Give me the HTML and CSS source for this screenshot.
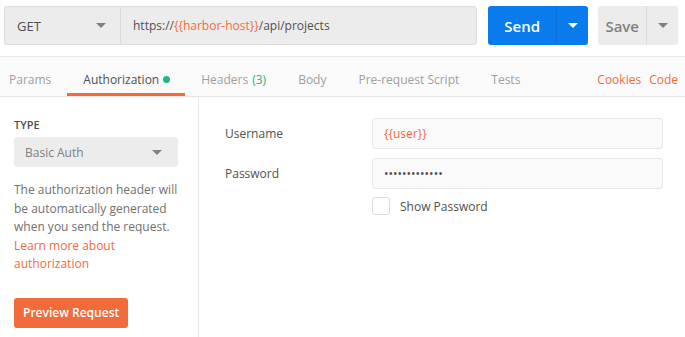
FILE: index.html
```html
<!DOCTYPE html>
<html>
<head>
    <meta charset="UTF-8">
    <title>Request - Authorization</title>
    <link rel="stylesheet" href="styles.css">
</head>
<body>
    <!-- request bar: method, url, send and save -->
    <div class="request-bar">
        <div class="method">
            <span>GET</span>
            <span class="caret"></span>
        </div>
        <div class="url">https://<span class="var">{{harbor-host}}</span>/api/projects</div>
        <div class="split-btn send-btn">
            <span class="main">Send</span>
            <span class="drop"><span class="caret white"></span></span>
        </div>
        <div class="split-btn save-btn">
            <span class="main">Save</span>
            <span class="drop"><span class="caret"></span></span>
        </div>
    </div>

    <!-- tabs -->
    <div class="tabs">
        <div class="tab">Params</div>
        <div class="tab active">Authorization <span class="dot"></span></div>
        <div class="tab">Headers <span class="count">(3)</span></div>
        <div class="tab">Body</div>
        <div class="tab">Pre-request Script</div>
        <div class="tab">Tests</div>
        <div class="tab-links">
            <span>Cookies</span>
            <span>Code</span>
        </div>
    </div>

    <!-- auth content -->
    <div class="auth">
        <div class="auth-side">
            <div class="type-label">TYPE</div>
            <div class="type-select">
                <span>Basic Auth</span>
                <span class="caret"></span>
            </div>
            <p class="help">
                The authorization header will be automatically generated when you send the request.
                <span class="link">Learn more about authorization</span>
            </p>
            <button class="preview-btn">Preview Request</button>
        </div>
        <div class="auth-form">
            <div class="form-row">
                <label>Username</label>
                <div class="field"><span class="var">{{user}}</span></div>
            </div>
            <div class="form-row">
                <label>Password</label>
                <div class="field dots">&bull;&bull;&bull;&bull;&bull;&bull;&bull;&bull;&bull;&bull;&bull;&bull;&bull;</div>
            </div>
            <div class="form-row check-row">
                <label></label>
                <div class="check">
                    <span class="box"></span>
                    <span>Show Password</span>
                </div>
            </div>
        </div>
    </div>
</body>
</html>
```

FILE: styles.css
```css
/* page */
body {
    margin: 0;
    font-family: 'Open Sans', 'Noto Sans', sans-serif;
    font-size: 12px;
    color: #505050;
    background-color: #fff;
}

.var {
    color: #f26b3a;
}

/* small triangle used in dropdowns */
.caret {
    display: inline-block;
    width: 0;
    height: 0;
    border-left: 5px solid transparent;
    border-right: 5px solid transparent;
    border-top: 5px solid #808080;
}

.caret.white {
    border-top-color: #fff;
}

/* request bar */
.request-bar {
    display: flex;
    height: 50px;
    padding: 6px 0 0 4px;
    border-bottom: 1px solid #e8e8e8;
}

.method {
    display: flex;
    align-items: center;
    justify-content: space-between;
    box-sizing: border-box;
    width: 116px;
    height: 39px;
    padding: 0 14px 0 12px;
    background-color: #ececec;
    border: 1px solid #dcdcdc;
    border-right: none;
    border-radius: 3px 0 0 3px;
    font-size: 13px;
    color: #505050;
}

.url {
    display: flex;
    align-items: center;
    box-sizing: border-box;
    width: 357px;
    height: 39px;
    padding-left: 12px;
    background-color: #ececec;
    border: 1px solid #dcdcdc;
    border-radius: 0 3px 3px 0;
    color: #505050;
}

.split-btn {
    display: flex;
    height: 39px;
    border-radius: 3px;
}

.split-btn .main,
.split-btn .drop {
    display: flex;
    align-items: center;
    justify-content: center;
}

.split-btn .drop {
    width: 31px;
}

.send-btn {
    width: 100px;
    margin-left: 11px;
    background-color: #097bed;
    color: #fff;
    font-size: 15px;
    font-weight: 600;
}

.send-btn .main {
    width: 69px;
}

.send-btn .drop {
    border-left: 1px solid #0a6fd6;
}

.save-btn {
    width: 80px;
    margin-left: 10px;
    background-color: #ececec;
    color: #808080;
    font-size: 15px;
    font-weight: 600;
}

.save-btn .main {
    width: 49px;
}

.save-btn .drop {
    border-left: 1px solid #dcdcdc;
}

/* tabs */
.tabs {
    display: flex;
    height: 39px;
    background-color: #fafafa;
    border-bottom: 1px solid #e4e4e4;
}

.tab {
    display: flex;
    align-items: center;
    padding: 9px 16px 0 16px;
    color: #a0a0a0;
    border-bottom: 3px solid transparent;
}

.tab:first-child {
    padding-left: 9px;
    padding-right: 16px;
}

.tab.active {
    padding-right: 15px;
    color: #505050;
    border-bottom-color: #f26b3a;
}

.dot {
    display: inline-block;
    width: 7px;
    height: 7px;
    margin-left: 4px;
    border-radius: 50%;
    background-color: #26b47f;
}

.count {
    margin-left: 4px;
    color: #26b47f;
}

.tab-links {
    display: flex;
    align-items: center;
    gap: 8px;
    margin-left: auto;
    padding: 6px 7px 0 0;
    color: #f26b3a;
}

/* auth content */
.auth {
    display: flex;
    height: 240px;
}

.auth-side {
    box-sizing: border-box;
    width: 199px;
    padding: 19px 14px 0 14px;
    border-right: 1px solid #e8e8e8;
}

.type-label {
    font-size: 11px;
    font-weight: 600;
    color: #505050;
    line-height: 18px;
}

.type-select {
    display: flex;
    align-items: center;
    justify-content: space-between;
    box-sizing: border-box;
    width: 164px;
    height: 30px;
    margin-top: 3px;
    padding: 0 16px 0 11px;
    background-color: #ececec;
    border-radius: 3px;
    color: #808080;
}

.help {
    margin: 14px 0 0 0;
    line-height: 18.5px;
    color: #707070;
}

.help .link {
    display: block;
    color: #f26b3a;
}

.preview-btn {
    margin-top: 24px;
    height: 30px;
    padding: 0 9px;
    border: none;
    border-radius: 3px;
    background-color: #f26b3a;
    color: #fff;
    font-family: 'Open Sans', 'Noto Sans', sans-serif;
    font-size: 12px;
    font-weight: 600;
}

.auth-form {
    padding: 21px 0 0 26px;
}

.form-row {
    display: flex;
    align-items: center;
    margin-bottom: 9px;
}

.form-row label {
    width: 147px;
    color: #505050;
}

.field {
    display: flex;
    align-items: center;
    box-sizing: border-box;
    width: 291px;
    height: 31px;
    padding-left: 11px;
    background-color: #fafafa;
    border: 1px solid #e6e6e6;
    border-radius: 3px;
}

.field.dots {
    font-size: 12px;
    letter-spacing: 0;
    color: #505050;
}

.check-row {
    margin-top: -1px;
}

.check {
    display: flex;
    align-items: center;
    gap: 10px;
    color: #505050;
}

.box {
    box-sizing: border-box;
    width: 18px;
    height: 18px;
    border: 1px solid #dcdcdc;
    border-radius: 3px;
    background-color: #fff;
}
```
